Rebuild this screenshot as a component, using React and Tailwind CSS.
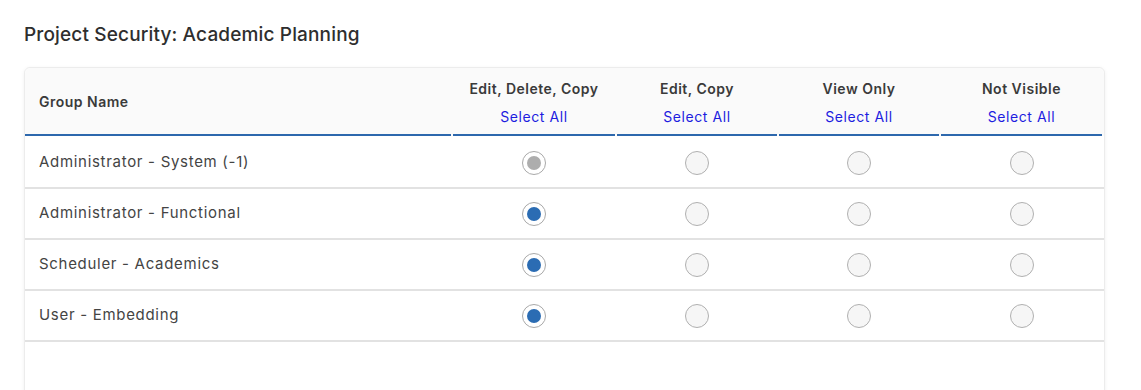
import { useState } from 'react';

const columns = ['Edit, Delete, Copy', 'Edit, Copy', 'View Only', 'Not Visible'];

const groups = [
  { name: 'Administrator - System (-1)', value: 0, locked: true },
  { name: 'Administrator - Functional', value: 0 },
  { name: 'Scheduler - Academics', value: 0 },
  { name: 'User - Embedding', value: 0 },
];

function Radio({ checked, disabled, onClick }) {
  return (
    <button
      type="button"
      onClick={onClick}
      className={`flex h-6 w-6 items-center justify-center rounded-full border-[1.5px] ${
        checked ? 'border-[#a9a9a9] bg-white' : 'border-[#b0b0b0] bg-[#f6f6f6]'
      }`}
    >
      {checked && (
        <span className={`h-[14px] w-[14px] rounded-full ${disabled ? 'bg-[#adadad]' : 'bg-[#2b6cb3]'}`} />
      )}
    </button>
  );
}

export default function App() {
  const [rows, setRows] = useState(groups);

  const pick = (i, v) => {
    setRows(rows.map((r, j) => (j === i && !r.locked ? { ...r, value: v } : r)));
  };

  const selectAll = (v) => {
    setRows(rows.map((r) => (r.locked ? r : { ...r, value: v })));
  };

  return (
    <div className="min-h-screen w-full bg-white px-6 pt-[23px] font-['Inter',sans-serif] text-[#333]">
      <h1 className="text-[19px] font-medium leading-6 tracking-[0.15px] text-[#2e2e2e]">
        Project Security: Academic Planning
      </h1>

      <div className="mt-5 h-[330px] w-[1081px] rounded-md border border-[#ececec] bg-white shadow-[0_1px_4px_rgba(0,0,0,0.06)]">
        <div className="grid grid-cols-[426px_162px_160px_160px_161px] gap-x-[2px] rounded-t-md bg-[#fafafa]">
          <div className="flex h-[68px] items-center border-b-2 border-[#2d68ad] pl-[14px] text-[14px] font-semibold tracking-[0.5px] text-[#3a3a3a]">
            Group Name
          </div>
          {columns.map((c, ci) => (
            <div
              key={c}
              className="flex h-[68px] flex-col items-center border-b-2 border-[#2d68ad] pt-[11px] text-[14px] tracking-[0.5px]"
            >
              <span className="font-semibold leading-5 text-[#3a3a3a]">{c}</span>
              <button
                type="button"
                onClick={() => selectAll(ci)}
                className="mt-[8px] leading-5 tracking-[0.6px] text-[#1d1de0]"
              >
                Select All
              </button>
            </div>
          ))}
        </div>

        <div className="pt-[2px]">
          {rows.map((r, i) => (
            <div
              key={r.name}
              className="grid h-[51px] grid-cols-[426px_162px_160px_160px_161px] gap-x-[2px] border-b-2 border-[#e2e2e2]"
            >
              <div className="flex items-center pl-[14px] text-[15px] tracking-[0.7px] text-[#444]">{r.name}</div>
              {columns.map((c, ci) => (
                <div key={c} className="flex items-center justify-center">
                  <Radio checked={r.value === ci} disabled={r.locked} onClick={() => pick(i, ci)} />
                </div>
              ))}
            </div>
          ))}
        </div>
      </div>
    </div>
  );
}
